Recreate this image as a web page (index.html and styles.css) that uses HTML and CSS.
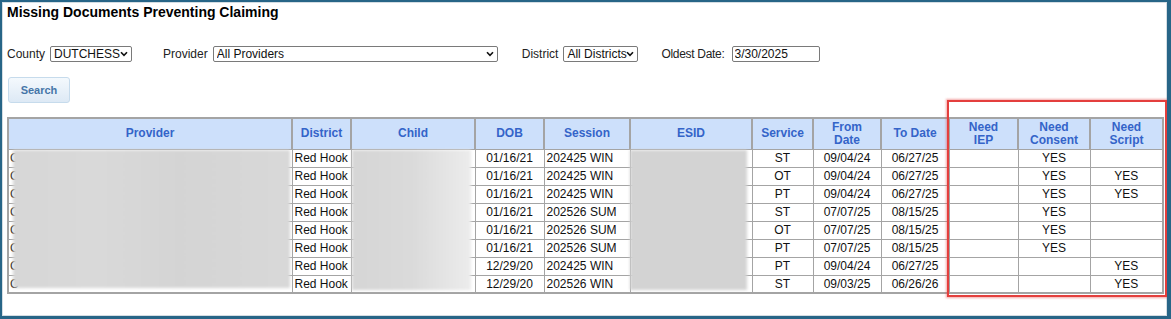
FILE: index.html
```html
<!DOCTYPE html>
<html>
<head>
<meta charset="utf-8">
<link rel="stylesheet" href="styles.css">
</head>
<body>
<div class="frame">
  <h1 class="title">Missing Documents Preventing Claiming</h1>
  <div class="filters">
    <label class="lbl">County</label>
    <span class="sel sel-county"><select><option>DUTCHESS</option></select><svg class="chev" viewBox="0 0 8 6" width="8" height="6"><path d="M1 1.2 L4 4.4 L7 1.2" fill="none" stroke="#111" stroke-width="1.6"/></svg></span>
    <label class="lbl lbl-provider">Provider</label>
    <span class="sel sel-provider"><select><option>All Providers</option></select><svg class="chev" viewBox="0 0 8 6" width="8" height="6"><path d="M1 1.2 L4 4.4 L7 1.2" fill="none" stroke="#111" stroke-width="1.6"/></svg></span>
    <label class="lbl lbl-district">District</label>
    <span class="sel sel-district"><select><option>All Districts</option></select><svg class="chev" viewBox="0 0 8 6" width="8" height="6"><path d="M1 1.2 L4 4.4 L7 1.2" fill="none" stroke="#111" stroke-width="1.6"/></svg></span>
    <label class="lbl lbl-date">Oldest Date:</label>
    <input class="date" type="text" value="3/30/2025">
  </div>
  <button class="search">Search</button>
  <div class="table-wrap">
    <table class="grid">
      <colgroup>
        <col class="c-provider"><col class="c-district"><col class="c-child"><col class="c-dob"><col class="c-session"><col class="c-esid"><col class="c-service"><col class="c-from"><col class="c-to"><col class="c-iep"><col class="c-consent"><col class="c-script">
      </colgroup>
      <thead>
        <tr>
          <th>Provider</th><th>District</th><th>Child</th><th>DOB</th><th>Session</th><th>ESID</th><th>Service</th><th>From<br>Date</th><th>To Date</th><th>Need<br>IEP</th><th>Need<br>Consent</th><th>Need<br>Script</th>
        </tr>
      </thead>
      <tbody>
        <tr><td class="l">C</td><td class="l">Red Hook</td><td></td><td>01/16/21</td><td class="l">202425 WIN</td><td></td><td>ST</td><td>09/04/24</td><td>06/27/25</td><td></td><td>YES</td><td></td></tr>
        <tr><td class="l">C</td><td class="l">Red Hook</td><td></td><td>01/16/21</td><td class="l">202425 WIN</td><td></td><td>OT</td><td>09/04/24</td><td>06/27/25</td><td></td><td>YES</td><td>YES</td></tr>
        <tr><td class="l">C</td><td class="l">Red Hook</td><td></td><td>01/16/21</td><td class="l">202425 WIN</td><td></td><td>PT</td><td>09/04/24</td><td>06/27/25</td><td></td><td>YES</td><td>YES</td></tr>
        <tr><td class="l">C</td><td class="l">Red Hook</td><td></td><td>01/16/21</td><td class="l">202526 SUM</td><td></td><td>ST</td><td>07/07/25</td><td>08/15/25</td><td></td><td>YES</td><td></td></tr>
        <tr><td class="l">C</td><td class="l">Red Hook</td><td></td><td>01/16/21</td><td class="l">202526 SUM</td><td></td><td>OT</td><td>07/07/25</td><td>08/15/25</td><td></td><td>YES</td><td></td></tr>
        <tr><td class="l">C</td><td class="l">Red Hook</td><td></td><td>01/16/21</td><td class="l">202526 SUM</td><td></td><td>PT</td><td>07/07/25</td><td>08/15/25</td><td></td><td>YES</td><td></td></tr>
        <tr><td class="l">C</td><td class="l">Red Hook</td><td></td><td>12/29/20</td><td class="l">202425 WIN</td><td></td><td>PT</td><td>09/04/24</td><td>06/27/25</td><td></td><td></td><td>YES</td></tr>
        <tr><td class="l">C</td><td class="l">Red Hook</td><td></td><td>12/29/20</td><td class="l">202526 WIN</td><td></td><td>ST</td><td>09/03/25</td><td>06/26/26</td><td></td><td></td><td>YES</td></tr>
      </tbody>
    </table>
    <div class="blur blur-provider"></div>
    <div class="blur blur-child"></div>
    <div class="blur blur-esid"></div>
    <div class="highlight"></div>
  </div>
</div>
</body>
</html>
```

FILE: styles.css
```css
* { box-sizing: border-box; }
html, body { margin: 0; padding: 0; background: #fff; }
body { font-family: "Liberation Sans", Arial, sans-serif; color: #111; }

.frame {
  width: 1171px;
  height: 319px;
  border-style: solid;
  border-color: #276587;
  border-width: 2px 4px 3px 2px;
  box-shadow: inset 0 0 0 1px #d4dde3;
  padding: 2px 0 0 5px;
  overflow: hidden;
}

.title {
  margin: 0;
  font-size: 14px;
  line-height: 16px;
  font-weight: bold;
  color: #000;
}

.filters {
  display: flex;
  align-items: center;
  height: 16px;
  margin-top: 26px;
  font-size: 12px;
}
.lbl { line-height: 14px; color: #222; white-space: nowrap; }
.sel {
  position: relative;
  display: inline-block;
  height: 16px;
  margin-left: 5px;
}
.sel select {
  appearance: none;
  -webkit-appearance: none;
  width: 100%;
  height: 16px;
  border: 1px solid #7a7a7a;
  border-radius: 2px;
  background: #fff;
  font-family: "Liberation Sans", Arial, sans-serif;
  font-size: 12px;
  color: #111;
  padding: 0 0 0 3px;
  line-height: 14px;
}
.chev { position: absolute; right: 4px; top: 5px; }
.sel-county { width: 82px; }
.sel-provider { width: 285px; }
.sel-district { width: 75px; }
.lbl-provider { margin-left: 31px; }
.lbl-district { margin-left: 24px; }
.lbl-date { margin-left: 23px; letter-spacing: -0.3px; }
.date {
  margin-left: 7px;
  width: 88px;
  height: 16px;
  border: 1px solid #7a7a7a;
  border-radius: 2px;
  font-family: "Liberation Sans", Arial, sans-serif;
  font-size: 12px;
  padding: 0 0 0 2px;
  color: #111;
}

.search {
  display: block;
  margin-top: 15px;
  margin-left: 1px;
  width: 62px;
  height: 26px;
  border: 1px solid #c6dbec;
  border-radius: 3px;
  background: linear-gradient(#f4f9fd, #dde9f5);
  font-family: "Liberation Sans", Arial, sans-serif;
  font-size: 11px;
  font-weight: bold;
  color: #4676a8;
  padding: 0;
}

.table-wrap {
  position: relative;
  margin-top: 14px;
  width: 1156px;
}
.grid {
  width: 1156px;
  table-layout: fixed;
  border-collapse: collapse;
  border: 2px solid #a4a4a4;
  font-size: 12px;
}
.c-provider { width: 284px; }
.c-district { width: 59px; }
.c-child { width: 124px; }
.c-dob { width: 69px; }
.c-session { width: 86px; }
.c-esid { width: 122px; }
.c-service { width: 61px; }
.c-from { width: 68px; }
.c-to { width: 68px; }
.c-iep { width: 69px; }
.c-consent { width: 72px; }
.c-script { width: 73px; }

.grid th {
  height: 31px;
  background: #cde0fb;
  color: #3464c9;
  font-weight: bold;
  font-size: 12px;
  line-height: 13px;
  border: 1px solid #a4a4a4;
  border-width: 1px 2px 1px 1px;
  padding: 0 2px;
  text-align: center;
  vertical-align: middle;
}
.grid td {
  height: 18px;
  border: 1px solid #a4a4a4;
  padding: 0 2px;
  text-align: center;
  white-space: nowrap;
  overflow: hidden;
  line-height: 14px;
  color: #111;
}
.grid td.l { text-align: left; padding-left: 2px; }
.grid td:first-child { padding-left: 1px; }

.blur { position: absolute; filter: blur(1.5px); }
.blur-provider {
  left: 6px; top: 33px; width: 277px; height: 138px;
  background: linear-gradient(90deg, #d6d6d6, #d9d9d9 30%, #d4d4d4 60%, #d8d8d8);
}
.blur-child {
  left: 345px; top: 33px; width: 119px; height: 140px;
  background: linear-gradient(90deg, #d5d5d5, #dadada 50%, #ececec);
}
.blur-esid {
  left: 623px; top: 33px; width: 117px; height: 140px;
  background: #d3d3d3;
}
.highlight {
  position: absolute;
  left: 940px;
  top: -17px;
  width: 220px;
  height: 197px;
  border: 2px solid #e43f3d;
  box-shadow: 0 0 2px 1px rgba(228, 63, 61, 0.45);
}
```
